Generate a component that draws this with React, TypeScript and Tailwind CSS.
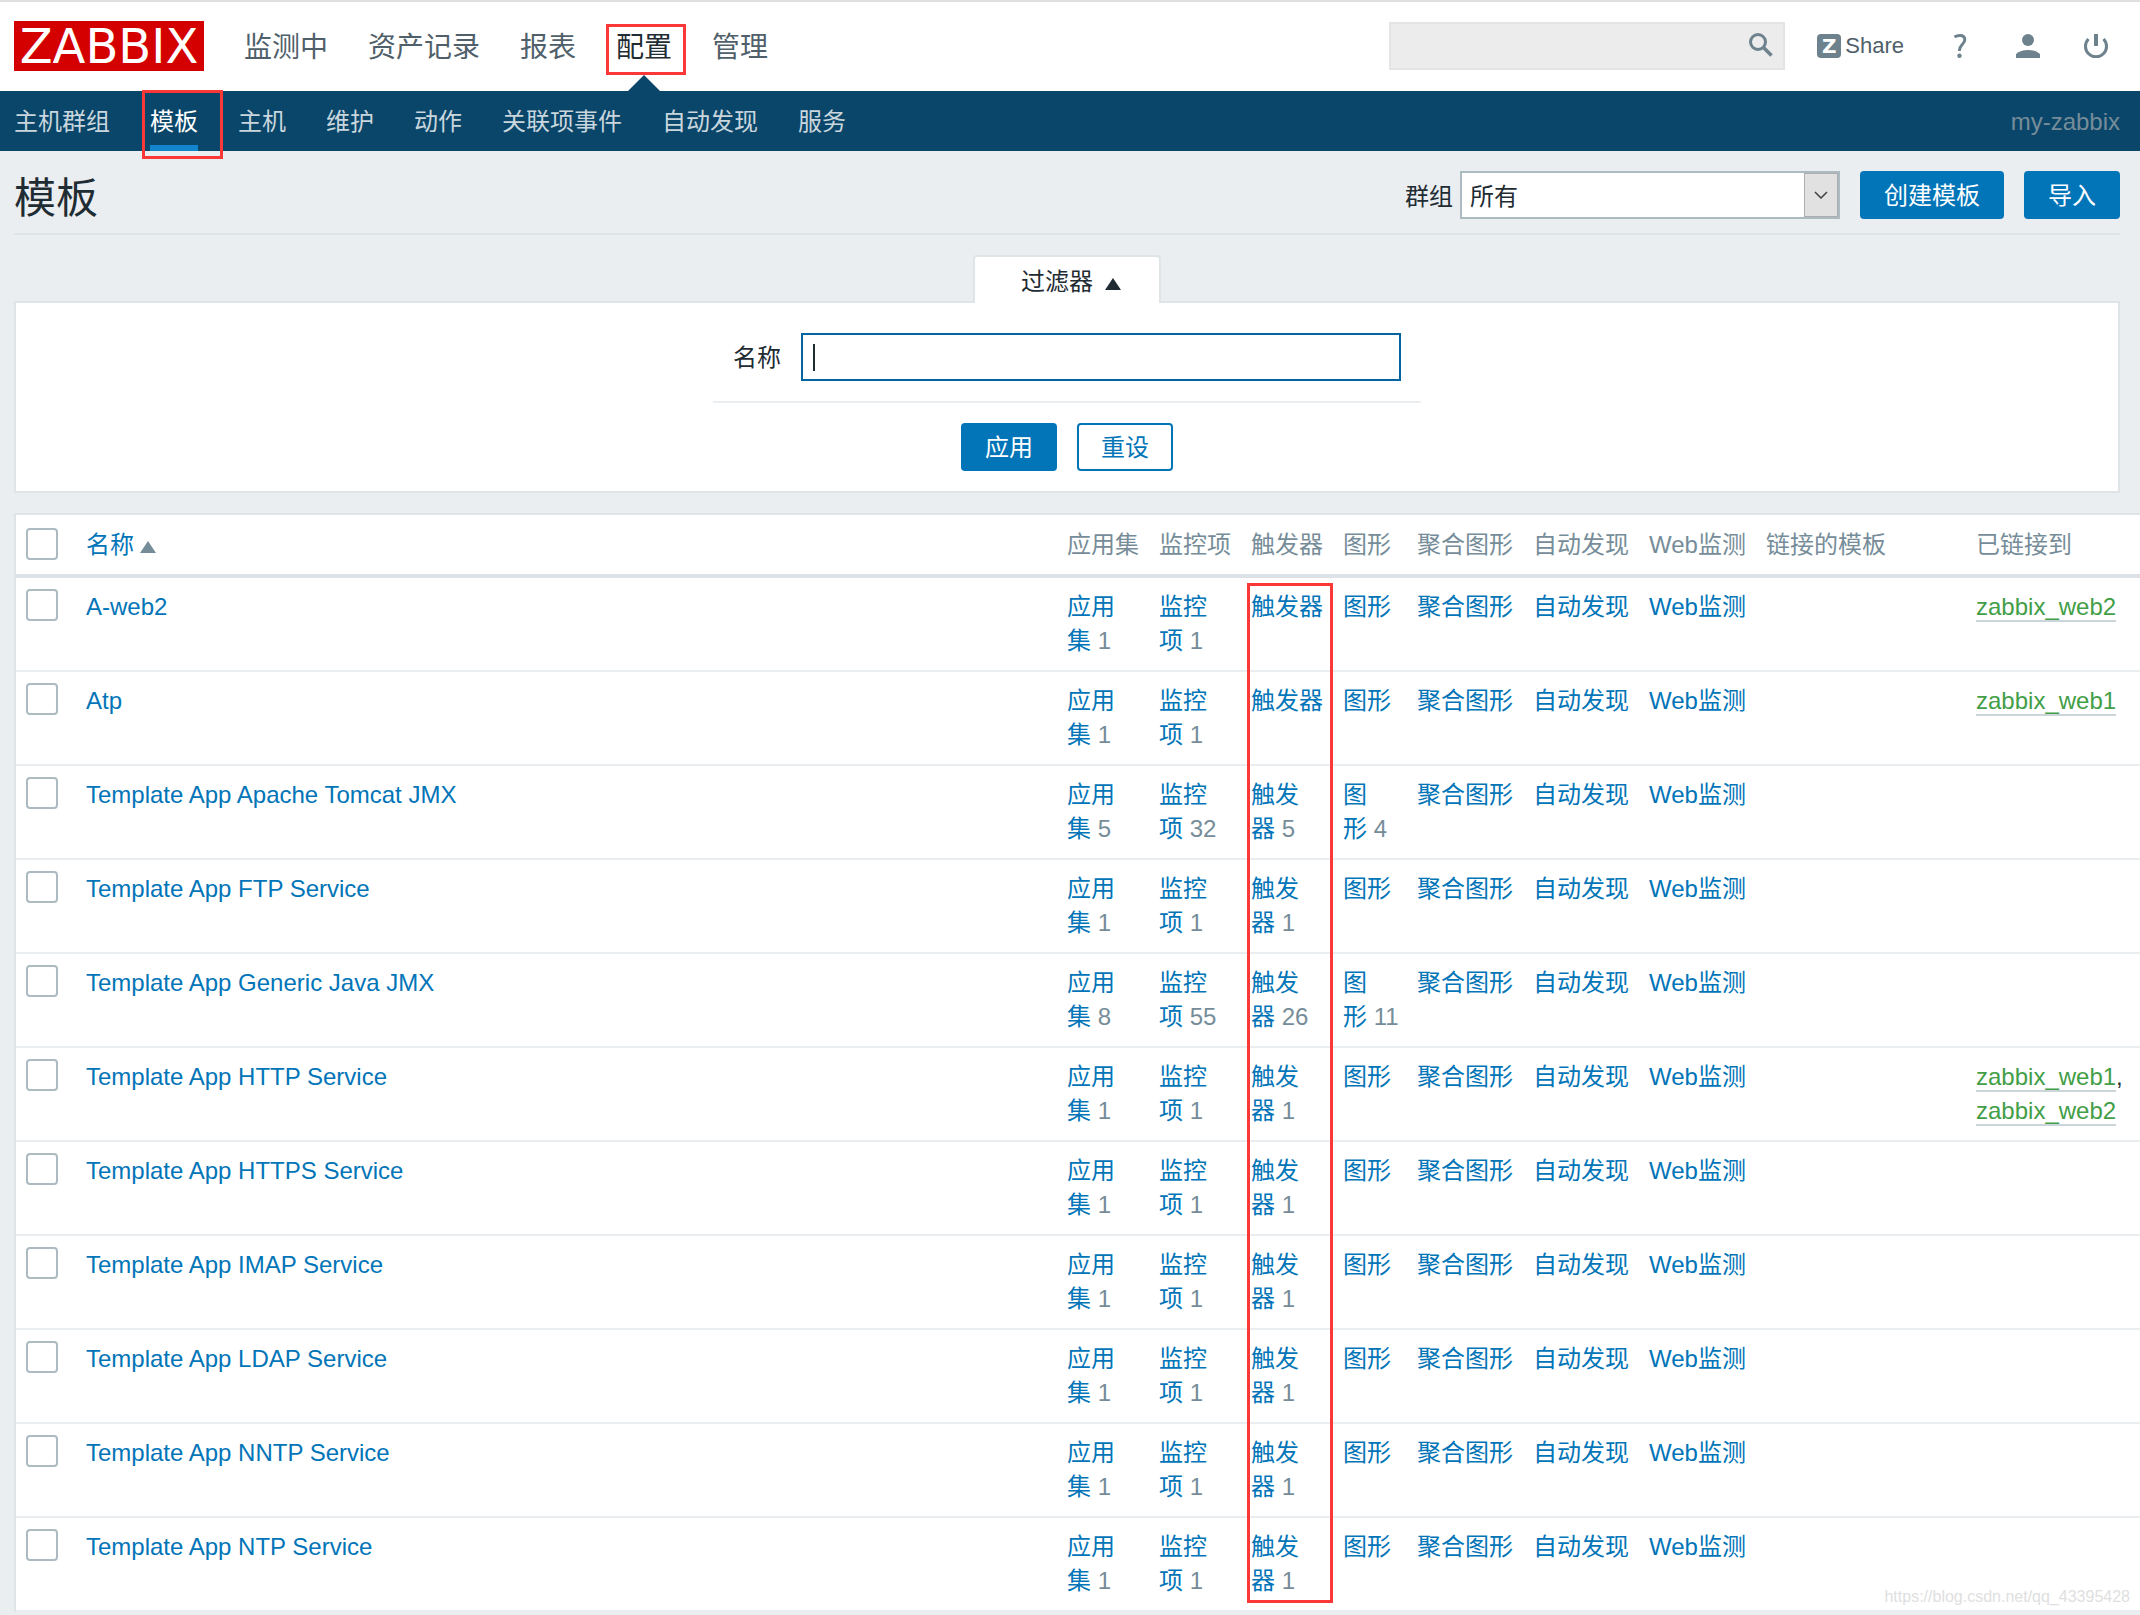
import { useState } from "react";
import clsx from "clsx";

type Counts = {
  apps?: number;
  items?: number;
  triggers?: number;
  graphs?: number;
};

type Template = Counts & {
  name: string;
  linkedTo?: string[];
};

const MAIN_MENU = ["监测中", "资产记录", "报表", "配置", "管理"];
const SUB_MENU = ["主机群组", "模板", "主机", "维护", "动作", "关联项事件", "自动发现", "服务"];

const TEMPLATES: Template[] = [
  { name: "A-web2", apps: 1, items: 1, linkedTo: ["zabbix_web2"] },
  { name: "Atp", apps: 1, items: 1, linkedTo: ["zabbix_web1"] },
  { name: "Template App Apache Tomcat JMX", apps: 5, items: 32, triggers: 5, graphs: 4 },
  { name: "Template App FTP Service", apps: 1, items: 1, triggers: 1 },
  { name: "Template App Generic Java JMX", apps: 8, items: 55, triggers: 26, graphs: 11 },
  { name: "Template App HTTP Service", apps: 1, items: 1, triggers: 1, linkedTo: ["zabbix_web1", "zabbix_web2"] },
  { name: "Template App HTTPS Service", apps: 1, items: 1, triggers: 1 },
  { name: "Template App IMAP Service", apps: 1, items: 1, triggers: 1 },
  { name: "Template App LDAP Service", apps: 1, items: 1, triggers: 1 },
  { name: "Template App NNTP Service", apps: 1, items: 1, triggers: 1 },
  { name: "Template App NTP Service", apps: 1, items: 1, triggers: 1 },
];

const COLUMNS = ["应用集", "监控项", "触发器", "图形", "聚合图形", "自动发现", "Web监测", "链接的模板", "已链接到"];

const SearchIcon = () => (
  <svg viewBox="0 0 24 24" className="h-6 w-6" fill="none" stroke="#6e828d" aria-hidden="true">
    <circle cx="9" cy="9" r="7.5" strokeWidth="3" />
    <path d="M14.5 14.5 L22.5 22.5" strokeWidth="3.5" />
  </svg>
);

const HelpIcon = () => (
  <svg viewBox="0 0 24 24" className="h-6 w-6" fill="none" stroke="#6e828d" aria-hidden="true">
    <path d="M6.500 3C8 2 10 1.500 12 1.500c3 0 4.800 1.500 4.800 4.200 0 4.500-5.500 5-5.500 11.300" strokeWidth="3" />
    <circle cx="11.500" cy="21.800" r="2.200" fill="#6e828d" stroke="none" />
  </svg>
);

const UserIcon = () => (
  <svg viewBox="0 0 24 24" className="h-6 w-6" fill="#6e828d" aria-hidden="true">
    <circle cx="12" cy="6" r="6" />
    <path d="M0 24v-4C3 17.500 7 16 12 16s9 1.500 12 4v4z" />
  </svg>
);

const PowerIcon = () => (
  <svg viewBox="0 0 24 24" className="h-6 w-6" fill="none" stroke="#6e828d" strokeWidth="3" aria-hidden="true">
    <path d="M4.500 5A10.500 10.500 0 1 0 19.500 5" />
    <path d="M12 0v12" strokeWidth="4" />
  </svg>
);

const Triangle = ({ className }: { className: string }) => (
  <svg viewBox="0 0 16 12" className={clsx("h-3 w-4", className)} fill="currentColor" aria-hidden="true">
    <path d="M8 0l8 12H0z" />
  </svg>
);

const Checkbox = ({ label }: { label: string }) => (
  <input
    type="checkbox"
    aria-label={label}
    className="block h-8 w-8 appearance-none rounded-sm border-2 border-[#acbbc2] bg-white checked:bg-[#0275b8]"
  />
);

const Cell = ({ label, count }: { label: string; count?: number }) => (
  <td className="px-[10px] py-3">
    <a href="#" className="text-[#0275b8]">{label}</a>
    {count !== undefined && <span className="text-[#768d99]">&nbsp;{count}</span>}
  </td>
);

const Header = () => (
  <header>
    <div className="flex h-[91px] items-center border-t-2 border-[#dfdfdf] bg-white pl-[14px] pr-8">
      <a
        href="#"
        className="mb-[2px] flex h-[50px] w-[190px] items-center justify-center bg-[#d40000] font-['DejaVu_Sans',sans-serif] text-5xl text-white"
      >
        ZABBIX
      </a>
      <nav className="ml-10 h-full" aria-label="主菜单">
        <ul className="flex h-full items-center gap-10 text-[28px]">
          {MAIN_MENU.map(m => (
            <li key={m} className="relative flex h-full items-center pt-[2px]">
              <a href="#" className={m === "配置" ? "text-[#1f2c33]" : "text-[#50606a]"}>{m}</a>
              {m === "配置" && (
                <>
                  <span className="absolute -left-[10px] top-[22px] h-[51px] w-20 border-[3px] border-[#fb3838]" />
                  <svg viewBox="0 0 32 16" className="absolute bottom-0 left-3 h-4 w-8" fill="#0a466a" aria-hidden="true">
                    <path d="M16 0l16 16H0z" />
                  </svg>
                </>
              )}
            </li>
          ))}
        </ul>
      </nav>
      <div className="mb-[2px] ml-auto flex items-center">
        <form className="relative" role="search">
          <input
            type="text"
            aria-label="搜索"
            className="block h-12 w-[396px] border-2 border-[#e4e4e4] bg-[#ececec] pl-3 pr-12 outline-none"
          />
          <button type="button" aria-label="搜索" className="absolute right-3 top-[11px]">
            <SearchIcon />
          </button>
        </form>
        <a href="#" className="ml-8 flex items-center gap-1 text-[22px] text-[#50606a]">
          <span className="flex h-6 w-6 items-center justify-center rounded-sm bg-[#6e828d] font-['DejaVu_Sans',sans-serif] text-xl leading-none font-bold text-white">
            Z
          </span>
          Share
        </a>
        <a href="#" aria-label="帮助" className="ml-11"><HelpIcon /></a>
        <a href="#" aria-label="用户" className="ml-11"><UserIcon /></a>
        <a href="#" aria-label="退出" className="ml-11"><PowerIcon /></a>
      </div>
    </div>
    <nav className="flex h-[60px] items-center bg-[#0a466a] pl-[14px] pr-5 text-[#c9d6de]" aria-label="子菜单">
      <ul className="flex h-full gap-10">
        {SUB_MENU.map(m => (
          <li key={m} className="relative h-full">
            <a
              href="#"
              className={clsx(
                "flex h-full items-center border-b-[6px] pt-2",
                m === "模板" ? "border-[#1385cc] text-white" : "border-transparent"
              )}
            >
              {m}
            </a>
            {m === "模板" && (
              <span className="absolute -left-2 -top-px z-10 h-[69px] w-[81px] border-[3px] border-[#fb3838]" />
            )}
          </li>
        ))}
      </ul>
      <span className="ml-auto pt-[2px] text-[#768d99]">my-zabbix</span>
    </nav>
  </header>
);

const Filter = () => {
  const [name, setName] = useState("");

  return (
    <section className="mt-5 flex flex-col items-center">
      <button
        type="button"
        className="z-10 -mb-[2px] flex h-12 items-center gap-3 rounded-t-sm border-2 border-b-0 border-[#dfe4e7] bg-white pl-[46px] pr-[38px] pt-1"
      >
        过滤器
        <Triangle className="mt-1" />
      </button>
      <form className="flex w-full flex-col items-center border-2 border-[#dfe4e7] bg-white pb-5 pt-[30px]">
        <div className="flex items-center gap-5 border-b-2 border-[#ebeef0] px-5 pb-5">
          <label htmlFor="filter-name" className="pt-[2px]">名称</label>
          <div className="relative">
            <input
              id="filter-name"
              type="text"
              value={name}
              onChange={e => setName(e.target.value)}
              className="block h-12 w-[600px] border-2 border-[#02659f] bg-white px-3 outline-none"
            />
            {name === "" && <span className="absolute left-3 top-[11px] h-[27px] w-[2px] bg-[#1f2c33]" />}
          </div>
        </div>
        <div className="mt-5 flex gap-5">
          <button type="submit" className="h-12 w-24 rounded-sm bg-[#0275b8] pt-[2px] text-white">应用</button>
          <button type="reset" className="h-12 w-24 rounded-sm border-2 border-[#0275b8] pt-[2px] text-[#0275b8]">重设</button>
        </div>
      </form>
    </section>
  );
};

const TemplateTable = () => (
  <div className="relative mt-5 border-l-2 border-t-2 border-[#dfe4e7] bg-white">
    <table className="w-full table-fixed border-collapse text-left">
      <colgroup>
        <col className="w-[60px]" />
        <col />
        <col className="w-[92px]" />
        <col className="w-[92px]" />
        <col className="w-[92px]" />
        <col className="w-[74px]" />
        <col className="w-[116px]" />
        <col className="w-[116px]" />
        <col className="w-[117px]" />
        <col className="w-[210px]" />
        <col className="w-[174px]" />
      </colgroup>
      <thead>
        <tr className="h-[61px] border-b-4 border-[#dce2e5] text-[#768d99]">
          <th className="px-[10px] pb-[2px]"><Checkbox label="全选" /></th>
          <th className="px-[10px] font-normal">
            <a href="#" className="flex items-center gap-[6px] text-[#0275b8]">
              名称
              <Triangle className="mt-1 text-[#768d99]" />
            </a>
          </th>
          {COLUMNS.map(c => (
            <th key={c} className="whitespace-nowrap px-[10px] font-normal">{c}</th>
          ))}
        </tr>
      </thead>
      <tbody>
        {TEMPLATES.map(t => (
          <tr key={t.name} className="h-[94px] border-b-2 border-[#ebeef0] align-top">
            <td className="px-[10px] py-[11px]"><Checkbox label={t.name} /></td>
            <td className="px-[10px] py-3"><a href="#" className="text-[#0275b8]">{t.name}</a></td>
            <Cell label="应用集" count={t.apps} />
            <Cell label="监控项" count={t.items} />
            <Cell label="触发器" count={t.triggers} />
            <Cell label="图形" count={t.graphs} />
            <Cell label="聚合图形" />
            <Cell label="自动发现" />
            <Cell label="Web监测" />
            <td />
            <td className="px-[10px] py-3">
              {t.linkedTo?.map((host, i) => (
                <span key={host}>
                  {i > 0 && ", "}
                  <a href="#" className="border-b-2 border-[#ccd5d9] text-[#429e47]">{host}</a>
                </span>
              ))}
            </td>
          </tr>
        ))}
      </tbody>
    </table>
    {/* highlight round the trigger column */}
    <div className="pointer-events-none absolute bottom-[9px] right-[807px] top-[68px] w-[86px] border-[3px] border-[#fb3838]" />
  </div>
);

export default function App() {
  return (
    <div className="relative min-h-screen overflow-hidden bg-[#ebeef0] font-['Liberation_Sans','Noto_Sans_CJK_SC',sans-serif] text-2xl leading-[34px] text-[#1f2c33]">
      <Header />
      <main className="pl-[14px]">
        <div className="pr-5">
          <div className="flex h-[84px] items-center border-b-2 border-[#dfe4e7] pt-[6px]">
            <h1 className="mt-2 text-[42px]">模板</h1>
            <form className="ml-auto flex items-center">
              <label htmlFor="group" className="mr-[7px] pt-1">群组</label>
              <div className="relative">
                <select id="group" className="block h-12 w-[380px] appearance-none border-2 border-[#acbbc2] bg-white pl-2 pr-10 pt-1">
                  <option>所有</option>
                </select>
                <span className="pointer-events-none absolute bottom-[2px] right-[2px] top-[2px] flex w-[34px] items-center justify-center border border-[#adadad] bg-[#e1e1e1]">
                  <svg viewBox="0 0 14 8" className="h-2 w-[14px]" fill="none" stroke="#404040" strokeWidth="1.500" aria-hidden="true">
                    <path d="M1 1l6 6 6-6" />
                  </svg>
                </span>
              </div>
              <button type="button" className="ml-5 h-12 w-36 rounded-sm bg-[#0275b8] pt-[2px] text-white">创建模板</button>
              <button type="button" className="ml-5 h-12 w-24 rounded-sm bg-[#0275b8] pt-[2px] text-white">导入</button>
            </form>
          </div>
          <Filter />
        </div>
        <TemplateTable />
      </main>
      <span className="absolute bottom-0 right-[10px] text-base leading-9 text-[#e0e0e0]">https://blog.csdn.net/qq_43395428</span>
    </div>
  );
}
